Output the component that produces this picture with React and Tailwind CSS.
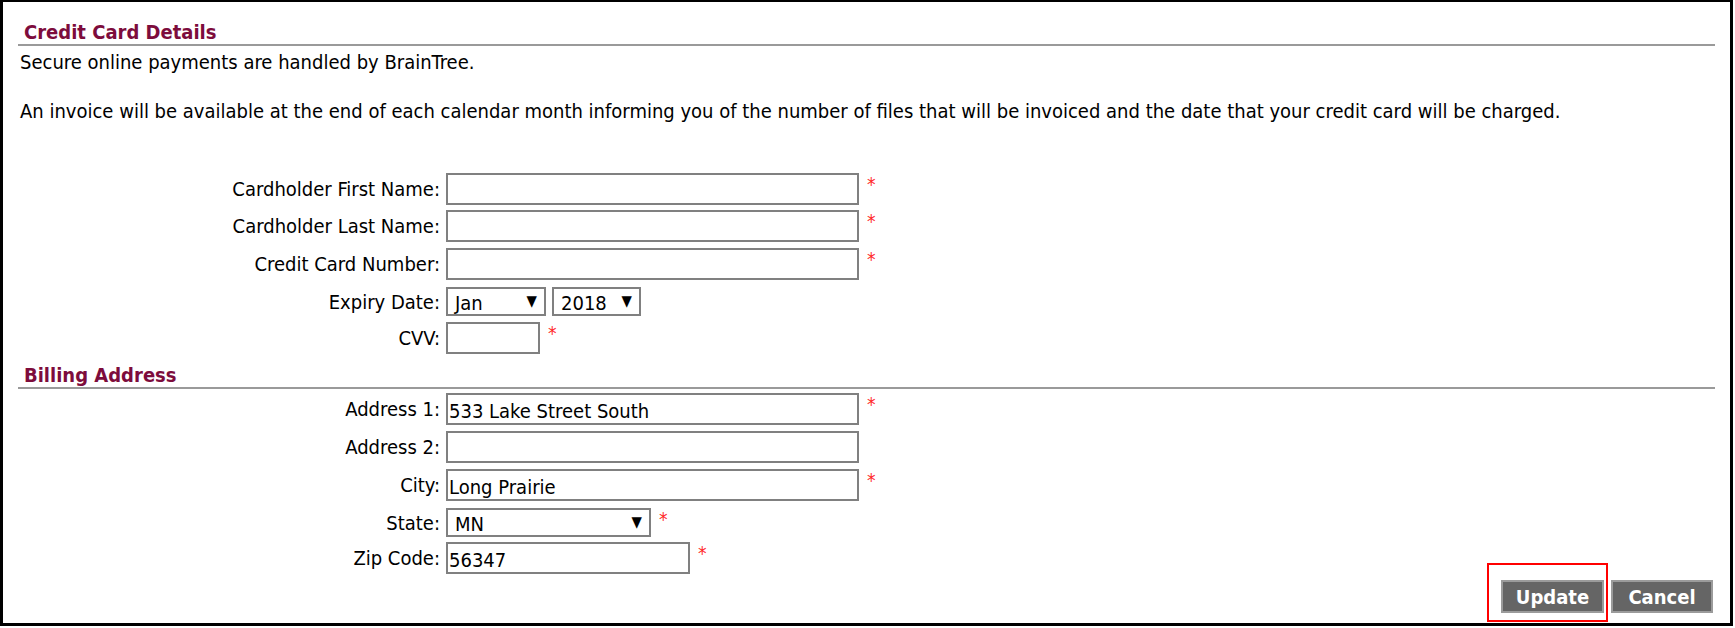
import { useState } from "react";

const FONT = "font-[family-name:'DejaVu_Sans_Condensed','DejaVu_Sans',sans-serif]";

function Req() {
  return <span className="ml-[8px] self-start mt-[2px] text-[19px] leading-[19px] text-[#ff2a2a]">*</span>;
}

function Row({ label, className = "", children }) {
  return (
    <div className={`flex items-center ${className}`}>
      <label className="w-[443px] pr-[6px] text-right leading-[24px]">{label}</label>
      {children}
    </div>
  );
}

function TextBox({ width, value }) {
  const [val, setVal] = useState(value || "");
  return (
    <input
      value={val}
      onChange={(e) => setVal(e.target.value)}
      className={`${width} h-[32px] border-2 border-[#808080] bg-white px-[1px] pt-[3px] text-[20px] text-black outline-none ${FONT}`}
    />
  );
}

function Select({ width, value }) {
  return (
    <div className={`${width} h-[29px] border-2 border-[#808080] bg-white flex items-center justify-between pl-[7px] pr-[7px]`}>
      <span className="leading-[24px] pt-[3px]">{value}</span>
      <span className="text-[15px] leading-none">▼</span>
    </div>
  );
}

function Heading({ children, className = "" }) {
  return (
    <div className={`mx-[15px] border-b-2 border-[#9a9a9a] ${className}`}>
      <h2 className="pl-[6px] font-bold text-[#7d0c3c] leading-[24px] text-[20px]">{children}</h2>
    </div>
  );
}

export default function App() {
  return (
    <div className={`relative w-[1733px] h-[626px] bg-white border-x-[3px] border-t-2 border-b-[3px] border-black text-[20px] text-black ${FONT}`}>
      {/* Credit card section */}
      <Heading className="mt-[18px]">Credit Card Details</Heading>
      <p className="ml-[17px] mt-[4px] leading-[24px]">Secure online payments are handled by BrainTree.</p>
      <p className="ml-[17px] mt-[25px] leading-[24px]">
        An invoice will be available at the end of each calendar month informing you of the number of files that will be invoiced and the date that your credit card will be charged.
      </p>

      <div className="mt-[50px] flex flex-col">
        <Row label="Cardholder First Name:">
          <TextBox width="w-[413px]" />
          <Req />
        </Row>
        <Row label="Cardholder Last Name:" className="mt-[5px]">
          <TextBox width="w-[413px]" />
          <Req />
        </Row>
        <Row label="Credit Card Number:" className="mt-[6px]">
          <TextBox width="w-[413px]" />
          <Req />
        </Row>
        <Row label="Expiry Date:" className="mt-[7px]">
          <Select width="w-[100px]" value="Jan" />
          <div className="ml-[6px]">
            <Select width="w-[89px]" value="2018" />
          </div>
        </Row>
        <Row label="CVV:" className="mt-[6px]">
          <TextBox width="w-[94px]" />
          <Req />
        </Row>
      </div>

      {/* Billing section */}
      <Heading className="mt-[9px]">Billing Address</Heading>
      <div className="mt-[4px] flex flex-col">
        <Row label="Address 1:">
          <TextBox width="w-[413px]" value="533 Lake Street South" />
          <Req />
        </Row>
        <Row label="Address 2:" className="mt-[6px]">
          <TextBox width="w-[413px]" />
        </Row>
        <Row label="City:" className="mt-[6px]">
          <TextBox width="w-[413px]" value="Long Prairie" />
          <Req />
        </Row>
        <Row label="State:" className="mt-[7px]">
          <Select width="w-[205px]" value="MN" />
          <Req />
        </Row>
        <Row label="Zip Code:" className="mt-[5px]">
          <TextBox width="w-[244px]" value="56347" />
          <Req />
        </Row>
      </div>

      <div className="mt-[6px] mr-[17px] flex justify-end gap-[7px]">
        <button className="w-[103px] h-[33px] bg-[#656565] border-2 border-[#9b9b9b] text-white font-bold text-[20px] leading-none">
          Update
        </button>
        <button className="w-[102px] h-[33px] bg-[#656565] border-2 border-[#9b9b9b] text-white font-bold text-[20px] leading-none">
          Cancel
        </button>
      </div>

      {/* highlight around Update */}
      <div className="absolute left-[1484px] top-[561px] w-[121px] h-[59px] border-2 border-[#ff0000] pointer-events-none" />
    </div>
  );
}
